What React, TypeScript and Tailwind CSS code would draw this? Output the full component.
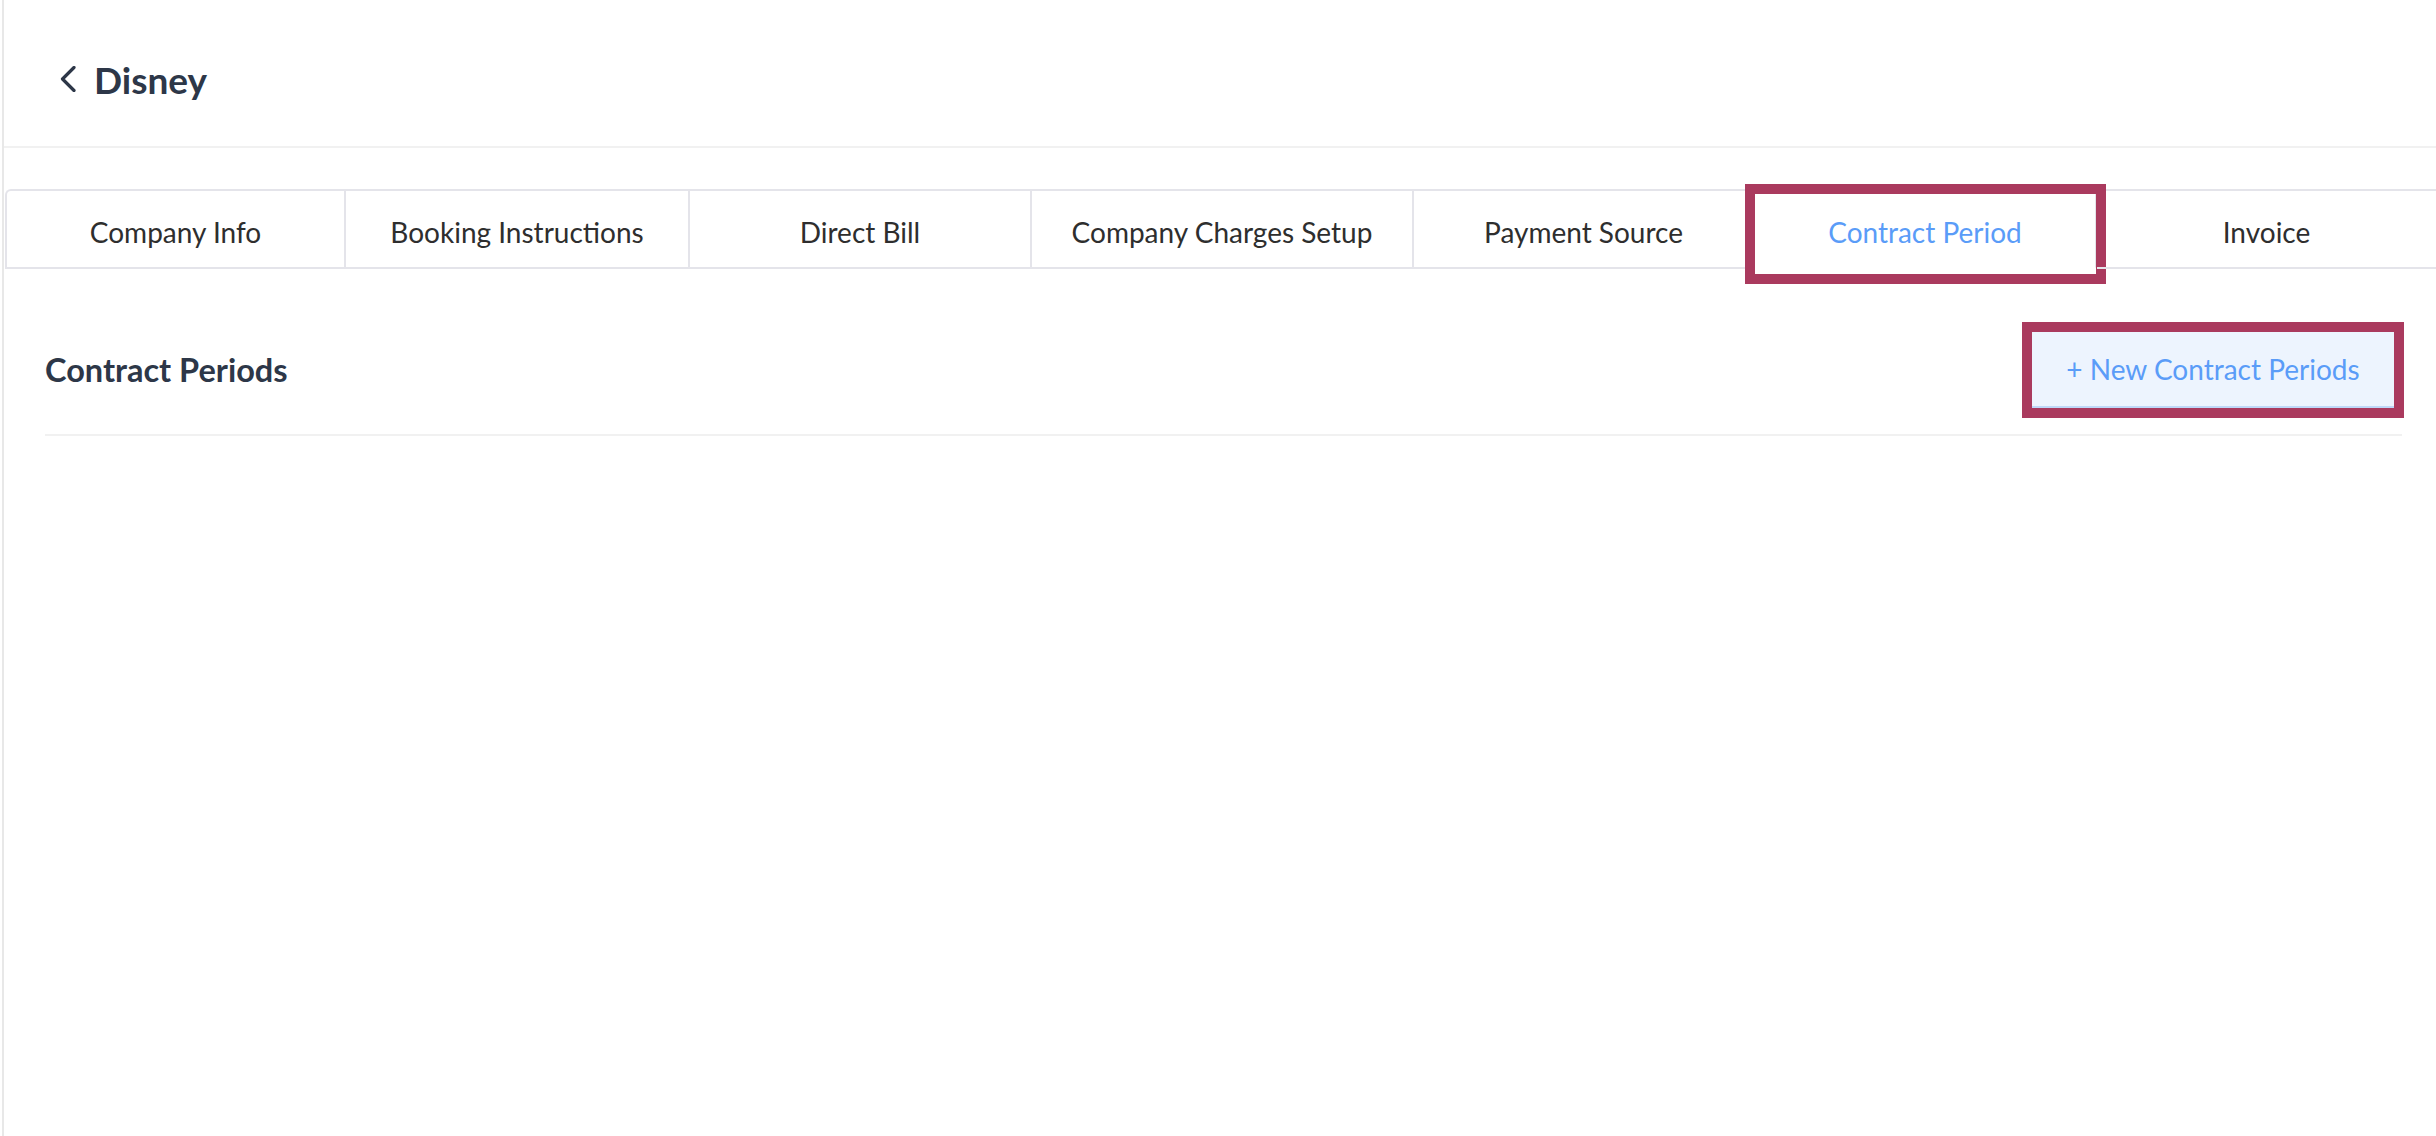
import React from "react";

const tabs = [
  { label: "Company Info", w: "w-[339px]" },
  { label: "Booking Instructions", w: "w-[344px]" },
  { label: "Direct Bill", w: "w-[342px]" },
  { label: "Company Charges Setup", w: "w-[382px]" },
  { label: "Payment Source", w: "w-[341px]" },
  { label: "Contract Period", w: "w-[342px]", active: true },
  { label: "Invoice", w: "flex-1", last: true },
];

function cn(...classes: Array<string | false | null | undefined>) {
  return classes.filter(Boolean).join(" ");
}

function ChevronLeft() {
  return (
    <svg width="16" height="26" viewBox="0 0 16 26" fill="none">
      <path d="M14 1.5 L2.5 13 L14 24.5" stroke="#2d3748" strokeWidth="3.2" strokeLinecap="round" strokeLinejoin="round" />
    </svg>
  );
}

export default function App() {
  return (
    <div className="min-h-[1136px] w-full bg-white" style={{ fontFamily: "Lato, 'Open Sans', sans-serif" }}>
      <div className="ml-[2px] min-h-[1136px] border-l-2 border-[#e8e8e8]">
        {/* Header */}
        <div className="flex h-[148px] items-center gap-[18px] border-b-2 border-[#f1f1f1] pl-[56px] pt-[12px]">
          <ChevronLeft />
          <h1 className="text-[37px] font-bold leading-none text-[#2d3748]">Disney</h1>
        </div>

        {/* Tabs */}
        <div className="ml-[1px] mt-[41px] flex rounded-tl-md border-l-2 border-t-2 border-[#e4e4ea]">
          {tabs.map((t) => (
            <div
              key={t.label}
              className={cn(
                "relative flex h-[78px] items-center justify-center border-b-2 border-[#e4e4ea] pt-[5px] text-[28px]",
                !t.last && "border-r-2",
                t.w,
                t.active ? "border-b-white text-[#5a9cf8]" : "text-[#2e2e2e]"
              )}
            >
              {t.label}
              {t.active && (
                <div className="pointer-events-none absolute -bottom-[17px] -left-[10px] -right-[11px] -top-[7px] border-[10px] border-[#aa3a5e]" />
              )}
            </div>
          ))}
        </div>

        {/* Contract periods */}
        <div className="pl-[41px] pr-[34px]">
          <div className="flex items-center justify-between border-b-2 border-[#f1f1f1] pb-[26px] pt-[63px]">
            <h2 className="text-[32.5px] font-bold leading-none text-[#2d3748]">Contract Periods</h2>
            <div className="relative mr-[8px]">
              <button className="flex h-[76px] w-[362px] items-center justify-center border-b-2 border-[#bfd8f8] bg-[#edf4fe] text-[28px] text-[#5a9cf8]">
                + New Contract Periods
              </button>
              <div className="pointer-events-none absolute -inset-[10px] border-[10px] border-[#aa3a5e]" />
            </div>
          </div>
        </div>
      </div>
    </div>
  );
}
